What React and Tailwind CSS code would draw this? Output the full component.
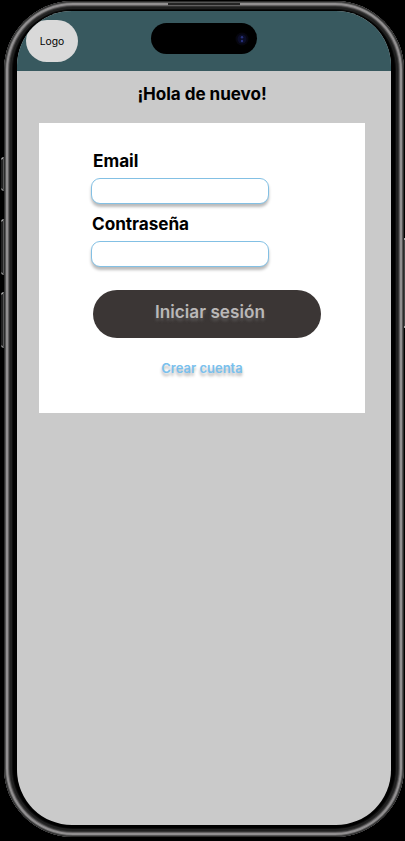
function SideButton({ className }) {
  return (
    <span
      className={`block w-[3px] rounded-l-sm border-t-2 border-b-2 border-r border-t-[#aaa] border-b-[#888] border-r-[#555] bg-[#222] ${className}`}
    />
  );
}

function DynamicIsland() {
  return (
    <div className="flex h-[31px] w-[106px] items-center justify-end rounded-full bg-black pr-2">
      <svg width="14" height="14" viewBox="0 0 14 14">
        <circle cx="7" cy="7" r="6.5" fill="#06060f" />
        <circle cx="7" cy="7" r="4.5" fill="#0b0d28" />
        <circle cx="7" cy="5.2" r="1.2" fill="#27327c" />
        <circle cx="7" cy="9" r="1.2" fill="#27327c" />
      </svg>
    </div>
  );
}

function Field({ id, label, type, labelClass }) {
  return (
    <div className="flex flex-col gap-1.5">
      <label htmlFor={id} className={`text-[17.2px] leading-[22px] font-bold ${labelClass}`}>
        {label}
      </label>
      <input
        id={id}
        type={type}
        className="h-[26px] w-[178px] rounded-[9px] border border-[#83c0e4] bg-white px-2 text-sm shadow-[0_3px_3px_rgba(0,0,0,0.27)] outline-none"
      />
    </div>
  );
}

export default function App() {
  return (
    <div className="flex h-[841px] w-[405px] overflow-hidden bg-black font-['Inter',sans-serif] text-black">
      <div className="flex w-1 flex-col items-center gap-[17px] pt-[157px]">
        <SideButton className="mb-[11px] h-[34px]" />
        <SideButton className="h-[56px]" />
        <SideButton className="h-[56px]" />
      </div>

      <div className="flex w-[400px] flex-col items-center pt-px pb-1">
        <div className="flex w-full flex-1 flex-col items-center gap-1.5 rounded-[69px] bg-black pt-0.5 pb-3 shadow-[inset_0_0_0_1px_#2c2c2c,inset_0_0_0_2px_#555,inset_0_0_0_4px_#918f90,inset_0_0_0_5px_#626061,inset_0_0_0_6px_#333,inset_0_0_0_8px_#202020,inset_0_0_0_9px_#0c0c0c]">
          <span className="h-0.5 w-[72px] bg-[#242424]" />
          <div className="flex w-[374px] flex-1 flex-col overflow-hidden rounded-[55px] bg-[#cacaca]">
            <header className="flex h-[60px] items-start gap-[73px] bg-[#38595f] pt-[9px] pl-[9px]">
              <div className="flex h-[42px] w-[52px] items-center justify-center rounded-[21px] bg-[#d9d9d9] pt-0.5 text-[10.3px]">
                Logo
              </div>
              <div className="pt-[3px]">
                <DynamicIsland />
              </div>
            </header>
            <main className="flex flex-col items-center gap-[18px] pt-3">
              <h1 className="pr-1 text-[17.1px] leading-[22px] font-bold tracking-[-0.05px]">
                ¡Hola de nuevo!
              </h1>
              <form className="flex h-[290px] w-[326px] flex-col items-center gap-[22px] self-start bg-white pt-[27px] ml-[22px]">
                <div className="flex w-[222px] flex-col gap-[9px]">
                  <Field id="email" label="Email" type="email" labelClass="pl-[2px]" />
                  <Field id="password" label="Contraseña" type="password" labelClass="pl-px tracking-[-0.05px]" />
                </div>
                <div className="flex flex-col items-center gap-[21px] pt-px pl-[10px]">
                  <button
                    type="button"
                    className="flex h-[47.5px] w-[228px] items-center justify-center rounded-full bg-[#3b3635] pb-1 pl-1.5 text-[17.2px] font-semibold text-[#bab8b8] [text-shadow:0_3px_3px_rgba(130,130,130,0.4)]"
                  >
                    Iniciar sesión
                  </button>
                  <a className="pr-[10px] text-[13px] leading-[18px] font-semibold text-[#79c0ed] [text-shadow:0_3px_3px_rgba(0,0,0,0.3)]">
                    Crear cuenta
                  </a>
                </div>
              </form>
            </main>
          </div>
        </div>
      </div>

      <div className="flex w-px flex-col pt-[238px]">
        <span className="h-[90px] border-t-2 border-b-2 border-[#aaa] bg-[#444]" />
      </div>
    </div>
  );
}
